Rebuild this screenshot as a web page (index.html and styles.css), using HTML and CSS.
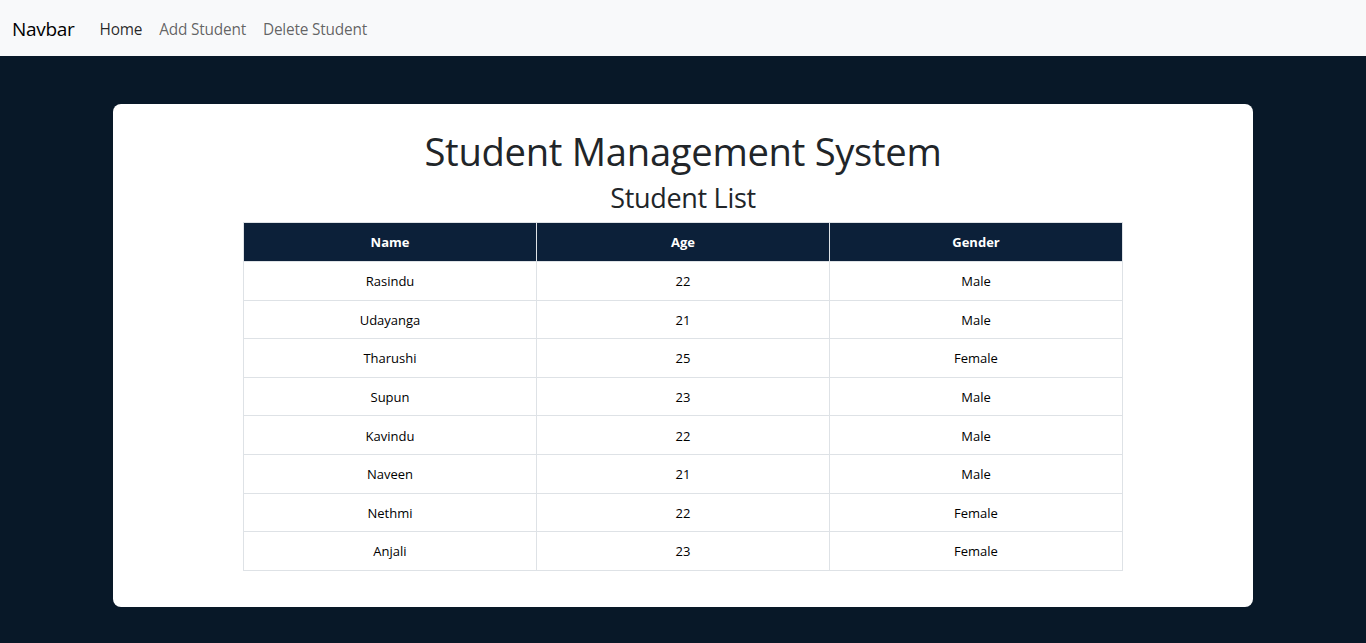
FILE: index.html
```html
<!DOCTYPE html>
<html lang="en">
<head>
<meta charset="utf-8">
<title>Student Management System</title>
<link rel="stylesheet" href="styles.css">
</head>
<body>
<nav class="navbar">
  <a class="brand" href="#">Navbar</a>
  <ul class="nav-links">
    <li><a class="active" href="#">Home</a></li>
    <li><a href="#">Add Student</a></li>
    <li><a href="#">Delete Student</a></li>
  </ul>
</nav>
<main class="page">
  <section class="card">
    <h1 class="title">Student Management System</h1>
    <h2 class="subtitle">Student List</h2>
    <table class="students">
      <thead>
        <tr><th>Name</th><th>Age</th><th>Gender</th></tr>
      </thead>
      <tbody>
        <tr><td>Rasindu</td><td>22</td><td>Male</td></tr>
        <tr><td>Udayanga</td><td>21</td><td>Male</td></tr>
        <tr><td>Tharushi</td><td>25</td><td>Female</td></tr>
        <tr><td>Supun</td><td>23</td><td>Male</td></tr>
        <tr><td>Kavindu</td><td>22</td><td>Male</td></tr>
        <tr><td>Naveen</td><td>21</td><td>Male</td></tr>
        <tr><td>Nethmi</td><td>22</td><td>Female</td></tr>
        <tr><td>Anjali</td><td>23</td><td>Female</td></tr>
      </tbody>
    </table>
  </section>
</main>
</body>
</html>
```
FILE: styles.css
```css
* { box-sizing: border-box; }
html, body { margin: 0; padding: 0; }
body {
  font-family: "Open Sans", "Noto Sans", sans-serif;
  background: #081828;
  color: #212529;
  min-height: 643px;
}
.navbar {
  background: #f8f9fa;
  height: 56px;
  display: flex;
  align-items: center;
  padding: 2px 12px 0;
}
.brand {
  font-size: 19px;
  color: #000;
  text-decoration: none;
  margin-right: 25px;
  letter-spacing: -0.3px;
}
.nav-links {
  list-style: none;
  display: flex;
  margin: 0;
  padding: 0;
}
.nav-links a {
  display: block;
  padding: 8px 8.5px;
  font-size: 15.4px;
  color: rgba(0,0,0,0.62);
  text-decoration: none;
  letter-spacing: -0.2px;
}
.nav-links li:first-child a { padding-left: 0; }
.nav-links a.active { color: rgba(0,0,0,0.85); }
.page {
  padding-top: 48px;
  display: flex;
  justify-content: center;
}
.card {
  width: 1140px;
  background: #fff;
  border-radius: 8px;
  padding: 20px 20px 36px;
}
.title {
  margin: 0;
  text-align: center;
  font-weight: 400;
  font-size: 38.2px;
  line-height: 54px;
  letter-spacing: -0.3px;
}
.subtitle {
  margin: 0;
  text-align: center;
  font-weight: 400;
  font-size: 27px;
  line-height: 40px;
  letter-spacing: -0.3px;
}
.students {
  width: 80%;
  margin: 4px auto 0;
  border-collapse: collapse;
  table-layout: fixed;
  font-size: 13px;
}
.students th, .students td {
  border: 1px solid #dee2e6;
  text-align: center;
  padding: 0 8px;
}
.students th {
  background: #0c2039;
  color: #fff;
  font-weight: 700;
  height: 39px;
}
.students td {
  height: 38.6px;
  color: #000;
  padding-top: 1px;
}
```
